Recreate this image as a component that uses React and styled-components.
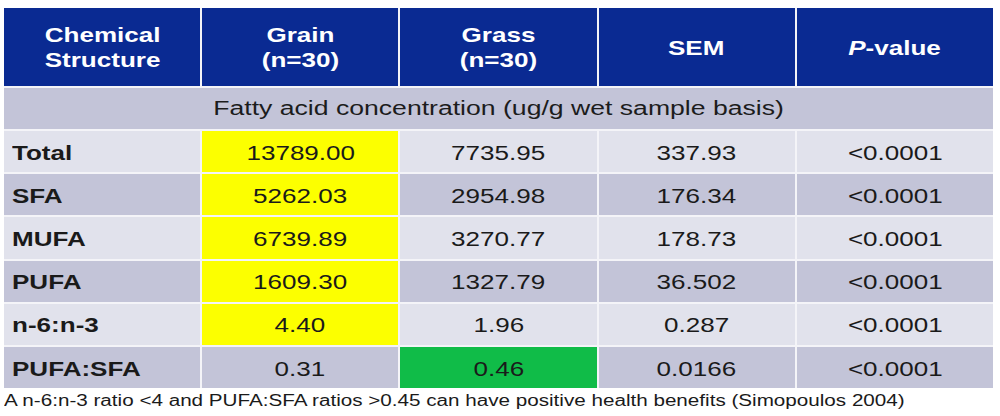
import React from "react";
import styled, { createGlobalStyle } from "styled-components";

const GlobalStyle = createGlobalStyle`
    html, body {
        margin: 0;
        padding: 0;
        background: #ffffff;
        font-family: "Liberation Sans", Arial, sans-serif;
    }
`;

const Page = styled.div`
    width: 1000px;
    height: 416px;
    padding: 8px 7px 0 4px;
    box-sizing: border-box;
    overflow: hidden;
`;

const Table = styled.div`
    display: grid;
    grid-template-columns: repeat(5, 1fr);
    grid-template-rows: 78px 41px repeat(6, 41.2px);
    gap: 2px;
    background: #f4f4f8;
`;

const HeadCell = styled.div`
    background: #0a2a92;
    color: #ffffff;
    font-weight: 700;
    font-size: 20.5px;
    line-height: 25px;
    display: flex;
    align-items: center;
    justify-content: center;
    text-align: center;
`;

const SubHead = styled.div`
    grid-column: 1 / -1;
    background: #c3c4d8;
    color: #1c1c1c;
    font-size: 20px;
    display: flex;
    align-items: center;
    justify-content: center;
`;

const bgFor = {
    light: "#e1e2ec",
    dark: "#c3c4d8",
    yellow: "#fcff00",
    green: "#10bc48",
};

const Cell = styled.div`
    background: ${({ $tone }) => bgFor[$tone]};
    color: #1a1a1a;
    font-size: 20.5px;
    display: flex;
    align-items: center;
    justify-content: ${({ $label }) => ($label ? "flex-start" : "center")};
    padding-left: ${({ $label }) => ($label ? "8px" : "0")};
    padding-top: 2px;
    font-weight: ${({ $label }) => ($label ? 700 : 400)};
`;

// the source picture is stretched sideways, so text is widened to match
const Wide = styled.span`
    display: inline-block;
    white-space: nowrap;
    transform: scaleX(${({ $k }) => $k || 1.27});
    transform-origin: ${({ $left }) => ($left ? "left center" : "center")};
`;

const Note = styled.div`
    margin-top: 3px;
    font-size: 16px;
    line-height: 19px;
    color: #1a1a1a;
`;

const rows = [
    { name: "Total", grain: "13789.00", grass: "7735.95", sem: "337.93", hi: "grain" },
    { name: "SFA", grain: "5262.03", grass: "2954.98", sem: "176.34", hi: "grain" },
    { name: "MUFA", grain: "6739.89", grass: "3270.77", sem: "178.73", hi: "grain" },
    { name: "PUFA", grain: "1609.30", grass: "1327.79", sem: "36.502", hi: "grain" },
    { name: "n-6:n-3", grain: "4.40", grass: "1.96", sem: "0.287", hi: "grain" },
    { name: "PUFA:SFA", grain: "0.31", grass: "0.46", sem: "0.0166", hi: "grass" },
];

const App = () => {
    return (
        <Page>
            <GlobalStyle />
            <Table>
                <HeadCell>
                    <Wide>
                        Chemical
                        <br />
                        Structure
                    </Wide>
                </HeadCell>
                <HeadCell>
                    <Wide>
                        Grain
                        <br />
                        (n=30)
                    </Wide>
                </HeadCell>
                <HeadCell>
                    <Wide>
                        Grass
                        <br />
                        (n=30)
                    </Wide>
                </HeadCell>
                <HeadCell>
                    <Wide>SEM</Wide>
                </HeadCell>
                <HeadCell>
                    <Wide>
                        <i>P</i>-value
                    </Wide>
                </HeadCell>

                <SubHead>
                    <Wide $k={1.33}>
                        Fatty acid concentration (ug/g wet sample basis)
                    </Wide>
                </SubHead>

                {rows.map((r, i) => {
                    const base = i % 2 === 0 ? "light" : "dark";
                    return (
                        <React.Fragment key={r.name}>
                            <Cell $tone={base} $label>
                                <Wide $left>{r.name}</Wide>
                            </Cell>
                            <Cell $tone={r.hi === "grain" ? "yellow" : base}>
                                <Wide>{r.grain}</Wide>
                            </Cell>
                            <Cell $tone={r.hi === "grass" ? "green" : base}>
                                <Wide>{r.grass}</Wide>
                            </Cell>
                            <Cell $tone={base}>
                                <Wide>{r.sem}</Wide>
                            </Cell>
                            <Cell $tone={base}>
                                <Wide>&lt;0.0001</Wide>
                            </Cell>
                        </React.Fragment>
                    );
                })}
            </Table>
            <Note>
                <Wide $left $k={1.29}>
                    A n-6:n-3 ratio &lt;4 and PUFA:SFA ratios &gt;0.45 can have
                    positive health benefits (Simopoulos 2004)
                </Wide>
            </Note>
        </Page>
    );
};

export default App;
